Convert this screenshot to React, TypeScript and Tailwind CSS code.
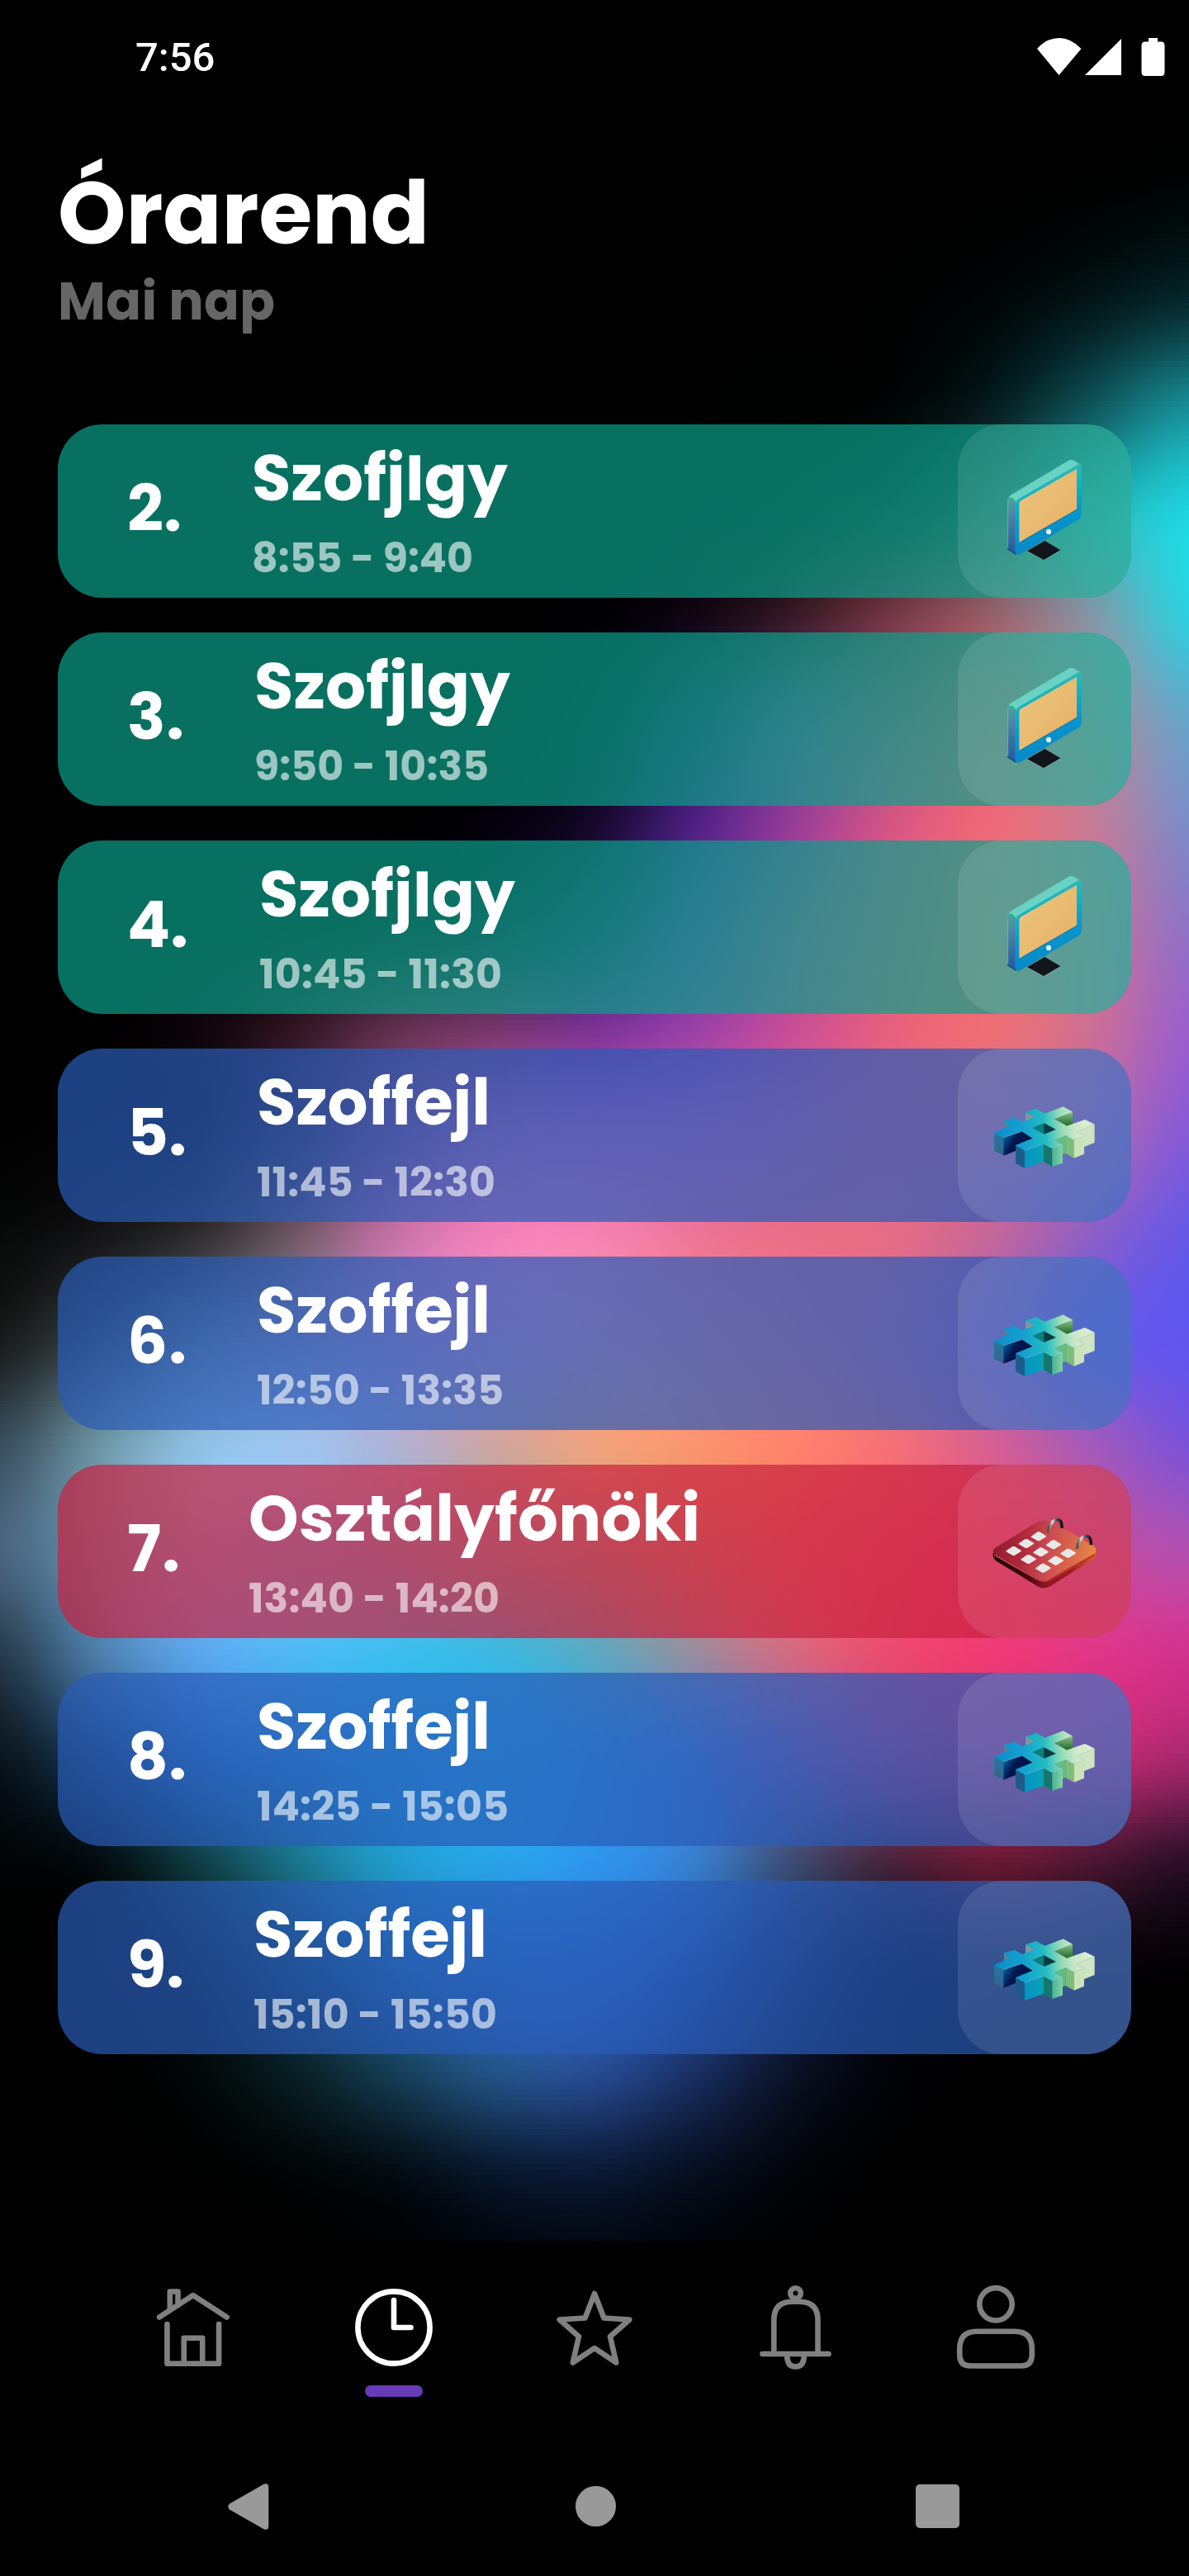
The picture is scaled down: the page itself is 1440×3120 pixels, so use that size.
import { useLayoutEffect, useRef, useState } from "react";
import type { ReactNode } from "react";

type RGB = [number, number, number];

/* Aurora colour field: one row every 126px, one stop every 120px. */
const Z: RGB = [0, 0, 0];
const FIELD: RGB[][] = [
  [Z, Z, Z, Z, Z, Z, Z, Z, Z, Z, Z, Z, Z],
  [Z, Z, Z, Z, Z, Z, Z, Z, Z, Z, Z, [0, 2, 2], [0, 6, 6]],
  [Z, Z, Z, Z, Z, Z, Z, Z, Z, [0, 1, 1], [0, 6, 7], [3, 22, 24], [6, 42, 46]],
  [Z, Z, Z, Z, Z, Z, Z, Z, [0, 2, 2], [1, 5, 5], [6, 28, 30], [14, 85, 90], [24, 142, 150]],
  [Z, Z, Z, Z, Z, Z, Z, [2, 2, 3], [5, 10, 10], [20, 28, 28], [50, 75, 75], [45, 165, 170], [30, 212, 222]],
  [Z, Z, Z, Z, Z, Z, [0, 0, 4], [16, 6, 18], [55, 25, 38], [115, 55, 70], [150, 95, 105], [130, 150, 165], [45, 208, 222]],
  [Z, Z, Z, Z, Z, Z, [5, 5, 20], [45, 25, 85], [115, 60, 130], [175, 78, 115], [220, 100, 112], [180, 135, 150], [100, 165, 202]],
  [Z, Z, Z, Z, Z, [4, 0, 12], [22, 8, 44], [78, 32, 128], [150, 60, 150], [212, 85, 132], [236, 105, 120], [198, 122, 148], [125, 140, 200]],
  [Z, Z, Z, [4, 2, 3], [15, 7, 12], [25, 14, 40], [50, 30, 90], [110, 50, 155], [180, 72, 152], [225, 90, 128], [236, 110, 118], [205, 115, 145], [142, 115, 198]],
  [Z, [1, 0, 1], [14, 5, 10], [50, 22, 36], [98, 48, 80], [120, 55, 110], [125, 52, 148], [155, 65, 165], [200, 78, 150], [230, 97, 125], [236, 110, 117], [205, 110, 148], [155, 95, 205]],
  [[1, 1, 1], [5, 5, 6], [14, 12, 14], [70, 45, 65], [150, 78, 125], [200, 100, 165], [215, 98, 180], [218, 98, 172], [225, 100, 152], [232, 105, 130], [225, 105, 135], [185, 105, 170], [132, 90, 215]],
  [[8, 9, 9], [22, 22, 24], [50, 48, 50], [115, 90, 105], [200, 115, 168], [242, 130, 185], [245, 132, 178], [238, 118, 152], [234, 110, 135], [228, 108, 135], [195, 102, 155], [140, 95, 200], [102, 88, 232]],
  [[25, 28, 28], [60, 75, 80], [105, 130, 145], [150, 150, 185], [195, 150, 200], [225, 150, 188], [242, 148, 165], [245, 138, 145], [242, 122, 135], [220, 112, 145], [175, 100, 175], [112, 90, 225], [98, 85, 238]],
  [[58, 78, 92], [108, 148, 165], [143, 192, 228], [158, 196, 238], [175, 178, 212], [205, 165, 160], [238, 162, 125], [250, 148, 112], [254, 130, 108], [244, 112, 118], [215, 95, 145], [165, 90, 185], [125, 82, 215]],
  [[72, 100, 125], [100, 148, 180], [125, 180, 225], [115, 182, 235], [120, 175, 215], [140, 168, 185], [165, 158, 150], [205, 140, 120], [238, 112, 108], [244, 85, 112], [235, 72, 125], [200, 75, 155], [178, 78, 175]],
  [[38, 58, 75], [75, 125, 170], [90, 165, 235], [78, 185, 242], [60, 190, 238], [60, 184, 225], [90, 168, 195], [150, 140, 160], [210, 105, 130], [234, 74, 112], [238, 58, 115], [224, 54, 134], [208, 50, 140]],
  [[10, 20, 28], [25, 62, 95], [40, 115, 182], [40, 145, 212], [35, 165, 230], [38, 172, 235], [48, 158, 230], [75, 132, 210], [135, 95, 160], [190, 65, 118], [205, 46, 102], [195, 42, 110], [165, 40, 108]],
  [[1, 4, 5], [3, 12, 15], [15, 60, 68], [26, 115, 140], [33, 155, 205], [40, 162, 230], [46, 148, 235], [55, 125, 205], [60, 75, 115], [70, 35, 58], [102, 25, 50], [75, 22, 48], [42, 14, 38]],
  [Z, [1, 3, 4], [5, 20, 25], [15, 62, 85], [30, 105, 160], [38, 114, 195], [42, 110, 200], [35, 82, 160], [22, 38, 78], [8, 8, 22], [10, 4, 12], [6, 2, 6], [3, 1, 3]],
  [Z, Z, [2, 8, 9], [9, 32, 38], [22, 62, 88], [35, 82, 135], [38, 75, 145], [25, 48, 100], [10, 18, 38], [2, 3, 8], Z, Z, Z],
  [Z, Z, Z, [1, 4, 5], [3, 11, 17], [8, 22, 42], [10, 24, 50], [6, 14, 30], [2, 4, 9], Z, Z, Z, Z],
  [Z, Z, Z, Z, [0, 1, 2], [1, 3, 7], [2, 4, 10], [1, 2, 5], Z, Z, Z, Z, Z],
];

function cubic(a: number, b: number, c: number, d: number, t: number) {
  const v =
    b + 0.5 * t * (c - a + t * (2 * a - 5 * b + 4 * c - d + t * (3 * (b - c) + d - a)));
  return Math.max(0, Math.min(255, v));
}

const ROW_STEPS = 18;
const STRIPS: string[] = [];
for (let r = 0; r < FIELD.length - 1; r++) {
  for (let s = 0; s < ROW_STEPS; s++) {
    const t = (s + 0.5) / ROW_STEPS;
    const at = (i: number) => FIELD[Math.max(0, Math.min(FIELD.length - 1, i))];
    const line = FIELD[0].map((_, c) =>
      [0, 1, 2].map((k) =>
        cubic(at(r - 1)[c][k], at(r)[c][k], at(r + 1)[c][k], at(r + 2)[c][k], t),
      ),
    );
    const stops: string[] = [];
    for (let c = 0; c < 12; c++) {
      for (let q = 0; q < 4; q++) {
        const px = (k: number) =>
          cubic(line[Math.max(0, c - 1)][k], line[c][k], line[c + 1][k], line[Math.min(12, c + 2)][k], q / 4).toFixed(1);
        stops.push(`rgb(${px(0)} ${px(1)} ${px(2)})`);
      }
    }
    stops.push(`rgb(${line[12].map((v) => v.toFixed(1)).join(" ")})`);
    STRIPS.push(`linear-gradient(90deg, ${stops.join(",")})`);
  }
}

function Aurora() {
  return (
    <div className="absolute inset-x-0 top-0 h-[2714px] overflow-hidden pt-[115px]" aria-hidden>
      {STRIPS.map((g, i) => (
        <div key={i} className="h-[7px]" style={{ backgroundImage: g }} />
      ))}
    </div>
  );
}

/* Tracks a line of text so that it spans the given advance width. */
function Fit({ width, className, children }: { width: number; className: string; children: string }) {
  const ref = useRef<HTMLSpanElement>(null);
  const [tracking, setTracking] = useState(0);
  useLayoutEffect(() => {
    if (!ref.current) return;
    const natural = ref.current.getBoundingClientRect().width;
    setTracking((width - natural) / (children.length - 1));
  }, [width, children]);
  return (
    <div className={`whitespace-nowrap ${className}`}>
      <span ref={ref} style={{ letterSpacing: tracking }}>
        {children}
      </span>
    </div>
  );
}

function MonitorIcon() {
  return (
    <svg viewBox="60 42 630 630" className="size-[210px]">
      <defs>
        <linearGradient id="mFrame" x1="0" y1="0" x2="0.25" y2="1">
          <stop offset="0.1" stopColor="#3fbfae" />
          <stop offset="0.42" stopColor="#10b3c4" />
          <stop offset="0.7" stopColor="#0796cf" />
          <stop offset="1" stopColor="#0a86c4" />
        </linearGradient>
        <linearGradient id="mSide" x1="0" y1="0" x2="0" y2="1">
          <stop offset="0" stopColor="#4fa89c" />
          <stop offset="0.35" stopColor="#4a86a2" />
          <stop offset="1" stopColor="#21579c" />
        </linearGradient>
        <linearGradient id="mScreen" x1="0" y1="0" x2="1" y2="1">
          <stop offset="0" stopColor="#edc581" />
          <stop offset="1" stopColor="#e5b062" />
        </linearGradient>
      </defs>
      <path d="M312 502 L376 465 L433 499 L372 535 Z" fill="#13151d" />
      <path d="M314 504 L372 536 L432 501" fill="none" stroke="#9fb0b4" strokeWidth="2" strokeDasharray="4 3" />
      <path d="M241 318 Q241 304 256 296 L280 320 V516 L241 494 Z" fill="url(#mSide)" />
      <path d="M242 316 V490" stroke="#9fb3c0" strokeWidth="2" />
      <path d="M241 494 L272 514" stroke="#154a86" strokeWidth="5" />
      <path d="M250 300 L460 175 Q472 168 482 173 L503 186 L490 200 L280 326 L268 326 Q258 310 246 310 Z" fill="#69d2c2" />
      <path d="M268 332 Q268 320 280 312 L490 190 Q510 180 510 202 V362 Q510 382 494 391 L288 513 Q268 522 268 500 Z" fill="url(#mFrame)" />
      <path d="M272 325 Q276 313 288 307 L494 187" fill="none" stroke="#a8e3da" strokeWidth="2" strokeDasharray="4 2" />
      <path d="M244 318 Q250 302 262 312 Q270 318 272 328 L262 322 Z" fill="#35ab9b" />
      <path d="M283 332 Q283 323 290 319 L492 204 V351 L283 471 Z" fill="url(#mScreen)" />
      <path d="M284 472 L493 351" stroke="#2b4964" strokeWidth="2.5" strokeDasharray="4 3" />
      <ellipse cx="390" cy="432" rx="9" ry="10" fill="#e8f3f7" />
    </svg>
  );
}

function HashIcon() {
  return (
    <svg viewBox="60 30 630 630" className="size-[210px]">
      <defs>
        <linearGradient id="hTop" gradientUnits="userSpaceOnUse" x1="195" y1="350" x2="555" y2="300">
          <stop offset="0" stopColor="#0d8bcb" />
          <stop offset="0.28" stopColor="#13a0cf" />
          <stop offset="0.5" stopColor="#22bdc3" />
          <stop offset="0.68" stopColor="#9cdcb8" />
          <stop offset="0.82" stopColor="#cfeacb" />
          <stop offset="1" stopColor="#deedd0" />
        </linearGradient>
        <linearGradient id="hFront" x1="0" y1="0" x2="1" y2="0">
          <stop offset="0" stopColor="#0593c6" />
          <stop offset="1" stopColor="#06a3b2" />
        </linearGradient>
        <linearGradient id="hLeft" x1="0" y1="0" x2="0" y2="1">
          <stop offset="0" stopColor="#23799f" />
          <stop offset="1" stopColor="#36638c" />
        </linearGradient>
        <linearGradient id="hNavy" x1="0" y1="0" x2="1" y2="0.5">
          <stop offset="0" stopColor="#0470b3" />
          <stop offset="0.45" stopColor="#02184f" />
          <stop offset="1" stopColor="#020f3b" />
        </linearGradient>
        <linearGradient id="hGreen" x1="0" y1="0" x2="1" y2="0">
          <stop offset="0" stopColor="#46b595" />
          <stop offset="1" stopColor="#83d1a6" />
        </linearGradient>
        <linearGradient id="hMoss" x1="0" y1="0" x2="0" y2="1">
          <stop offset="0" stopColor="#8cbf80" />
          <stop offset="1" stopColor="#1f6a2e" />
        </linearGradient>
      </defs>
      <path d="M228 292 L262 308 L228 322 Z" fill="#5a7f9e" />
      <path d="M306 262 L342 280 L306 296 Z" fill="#7e98a0" />
      <path d="M411 286 L477 260 V304 L458 311 Z" fill="url(#hMoss)" />
      <path d="M411 364 L452 346 V412 L441 414 V380 Z" fill="#62bd86" />
      <path d="M452 346 L482 362 V428 L452 411 Z" fill="#7cbd7c" />
      <path d="M482 362 L519 348 V413 L482 428 Z" fill="#cbe3b6" />
      <path d="M490 334 L557 305 V372 L519 387 V348 Z" fill="#cee4c2" />
      <path d="M192 336 L226 353 V419 L192 401 Z" fill="url(#hLeft)" />
      <path d="M226 353 L292 331 L332 356 L270 382 V402 L226 419 Z" fill="url(#hNavy)" />
      <path d="M270 382 L303 400 V465 L270 447 Z" fill="#1e5b8a" />
      <path d="M303 400 L372 376 V440 L303 465 Z" fill="url(#hFront)" />
      <path d="M372 376 L403 392 V459 L372 441 Z" fill="#16776f" />
      <path d="M403 392 L441 380 V446 L403 459 Z" fill="url(#hGreen)" />
      <path
        fillRule="evenodd"
        fill="url(#hTop)"
        d="M192 336 L246 312 L228 292 L266 281 L294 297 L340 279 L306 262 L344 249 L377 266 L443 241 L477 260 L411 286 L456 311 L522 288 L557 305 L490 334 L519 348 L482 362 L452 346 L411 364 L441 380 L403 392 L372 376 L303 400 L270 382 L332 356 L292 331 L226 353 Z M331 318 L373 341 L416 324 L373 301 Z"
      />
      <path d="M331 318 L373 301 V341 Z" fill="#08807f" />
      <path d="M373 301 L416 324 L373 341 Z" fill="#053f40" />
      <path d="M226 353 L292 331 M303 400 L372 376 L403 392 L441 380" fill="none" stroke="#a5dbe3" strokeWidth="2" strokeDasharray="4 3" />
    </svg>
  );
}

const DAYS: [number, number][] = [
  [353, 302], [308, 328], [262, 355],
  [407, 332], [361, 359], [316, 385],
  [460, 363], [415, 390], [369, 417],
];

function CalendarIcon() {
  return (
    <svg viewBox="60 42 630 630" className="size-[210px]">
      <defs>
        <linearGradient id="cTop" x1="0" y1="0.4" x2="1" y2="0.5">
          <stop offset="0" stopColor="#8e1a2b" />
          <stop offset="0.3" stopColor="#b02a3c" />
          <stop offset="0.55" stopColor="#cc4c50" />
          <stop offset="0.8" stopColor="#dc6a4a" />
          <stop offset="1" stopColor="#e88a43" />
        </linearGradient>
        <linearGradient id="cSide" x1="0" y1="0" x2="1" y2="0">
          <stop offset="0" stopColor="#1c0508" />
          <stop offset="0.35" stopColor="#4a0a10" />
          <stop offset="0.5" stopColor="#8e1420" />
          <stop offset="0.75" stopColor="#a01c1c" />
          <stop offset="1" stopColor="#d4661f" />
        </linearGradient>
        <linearGradient id="cRing" x1="0" y1="0" x2="1" y2="0">
          <stop offset="0" stopColor="#4b4b4b" />
          <stop offset="0.3" stopColor="#e6e6e6" />
          <stop offset="0.55" stopColor="#5a5a5a" />
          <stop offset="1" stopColor="#111111" />
        </linearGradient>
      </defs>
      <path d="M188 364 Q186 382 200 392 L350 484 Q373 498 398 482 L548 388 Q564 376 563 358 L375 300 Z" fill="url(#cSide)" />
      <path d="M192 370 L350 460 Q372 470 396 460 L556 370" fill="none" stroke="#c03038" strokeWidth="5" />
      <path d="M196 344 L344 253 Q356 246 370 246 L392 246 L440 270 L552 336 Q572 352 554 366 L398 455 Q372 468 350 455 L196 368 Q180 356 196 344 Z" fill="url(#cTop)" />
      <path d="M192 368 L350 457 Q372 468 394 458" fill="none" stroke="#e8a09c" strokeWidth="2" strokeDasharray="4 3" />
      {DAYS.map(([x, y]) => (
        <path
          key={`${x}-${y}`}
          d={`M${x - 26} ${y} L${x - 3} ${y - 16} L${x + 4} ${y - 16} L${x + 28} ${y - 2} V${y + 2} L${x + 4} ${y + 17} L${x - 2} ${y + 17} L${x - 27} ${y + 3} Z`}
          fill="#e9e8e8"
        />
      ))}
      <g fill="none" strokeLinecap="butt">
        <path d="M390 288 C390 258 408 242 422 242 C434 242 438 254 438 272" stroke="url(#cRing)" strokeWidth="11" />
        <path d="M495 348 C495 318 513 302 527 302 C540 302 544 314 544 333" stroke="url(#cRing)" strokeWidth="11" />
      </g>
    </svg>
  );
}

type Kind = "monitor" | "hash" | "calendar";
const ICONS: Record<Kind, () => ReactNode> = { monitor: MonitorIcon, hash: HashIcon, calendar: CalendarIcon };
const TINT: Record<Kind, string> = {
  monitor: "bg-[#0ca08a]/70",
  hash: "bg-[#295bb6]/70",
  calendar: "bg-[#c82240]/70",
};

interface Lesson {
  n: string;
  nWidth: number;
  gap: string;
  title: string;
  titleWidth: number;
  time: string;
  timeWidth: number;
  kind: Kind;
}

const LESSONS: Lesson[] = [
  { n: "2.", nWidth: 66, gap: "w-[151px]", title: "SzofjIgy", titleWidth: 310, time: "8:55 - 9:40", timeWidth: 268, kind: "monitor" },
  { n: "3.", nWidth: 69, gap: "w-[154px]", title: "SzofjIgy", titleWidth: 310, time: "9:50 - 10:35", timeWidth: 284, kind: "monitor" },
  { n: "4.", nWidth: 74, gap: "w-[160px]", title: "SzofjIgy", titleWidth: 310, time: "10:45 - 11:30", timeWidth: 294, kind: "monitor" },
  { n: "5.", nWidth: 72, gap: "w-[157px]", title: "Szoffejl", titleWidth: 283, time: "11:45 - 12:30", timeWidth: 289, kind: "hash" },
  { n: "6.", nWidth: 72, gap: "w-[157px]", title: "Szoffejl", titleWidth: 283, time: "12:50 - 13:35", timeWidth: 299, kind: "hash" },
  { n: "7.", nWidth: 64, gap: "w-[147px]", title: "Osztályfőnöki", titleWidth: 547, time: "13:40 - 14:20", timeWidth: 304, kind: "calendar" },
  { n: "8.", nWidth: 72, gap: "w-[157px]", title: "Szoffejl", titleWidth: 283, time: "14:25 - 15:05", timeWidth: 305, kind: "hash" },
  { n: "9.", nWidth: 69, gap: "w-[153px]", title: "Szoffejl", titleWidth: 283, time: "15:10 - 15:50", timeWidth: 295, kind: "hash" },
];

function LessonCard({ lesson }: { lesson: Lesson }) {
  const Icon = ICONS[lesson.kind];
  return (
    <li className={`flex h-[210px] overflow-hidden rounded-[54px] pl-[84px] ${TINT[lesson.kind]}`}>
      <div className={`shrink-0 pt-[62px] ${lesson.gap}`}>
        <Fit width={lesson.nWidth} className="text-[77px] leading-[80px]">{lesson.n}</Fit>
      </div>
      <div className="min-w-0 flex-1 pt-[25px]">
        <Fit width={lesson.titleWidth} className="text-[77px] leading-[80px]">{lesson.title}</Fit>
        <Fit width={lesson.timeWidth} className="mt-[27px] text-[49px] leading-[60px] text-white/60">{lesson.time}</Fit>
      </div>
      <div className="size-[210px] shrink-0 rounded-[54px] bg-white/10">
        <Icon />
      </div>
    </li>
  );
}

function StatusBar() {
  return (
    <div className="flex h-[140px] items-center justify-between pl-[164px] pr-[28px] font-[Roboto] text-[49px] font-medium">
      <span>7:56</span>
      <svg viewBox="1258 41 156 56" className="h-14 w-[156px]" fill="#fff">
        <path d="M1284.500 90 L1258 58 Q1270 45 1284.500 45 Q1299 45 1311.500 58 Z" />
        <path d="M1360 46 V90 H1316 Z" />
        <path d="M1393 45 H1404 V49.500 H1408 Q1412.500 49.500 1412.500 54 V86.500 Q1412.500 91 1408 91 H1389 Q1384.500 91 1384.500 86.500 V54 Q1384.500 49.500 1389 49.500 H1393 Z" />
      </svg>
    </div>
  );
}

const TABS: { id: string; box: string; draw: ReactNode }[] = [
  {
    id: "home",
    box: "186 2760 96 116",
    draw: (
      <>
        <path d="M205.800 2797 V2775.500 H215.500 V2792" />
        <path d="M193 2806.500 L233.800 2780 L274.700 2806.500" />
        <path d="M202.400 2815 V2862.700 H265.100 V2815" />
        <path d="M222.700 2862.700 V2831.700 H245.200 V2862.700" />
      </>
    ),
  },
  {
    id: "timetable",
    box: "429 2760 96 116",
    draw: (
      <>
        <circle cx="477" cy="2819" r="43.600" />
        <path d="M477 2786 V2819 H497.500" />
      </>
    ),
  },
  {
    id: "grades",
    box: "672 2760 96 116",
    draw: (
      <path d="M720 2778 L731.400 2807.500 L762.300 2809.500 L739 2830 L746.200 2861.500 L720 2844 L693.800 2861.500 L701 2830 L677.700 2809.500 L708.600 2807.500 Z" />
    ),
  },
  {
    id: "messages",
    box: "915 2760 96 116",
    draw: (
      <>
        <circle cx="963.500" cy="2777.500" r="6.300" />
        <path d="M937.300 2851 V2810 Q937.300 2787.700 959.500 2787.700 H968 Q990.500 2787.700 990.500 2810 V2851" />
        <path d="M923.500 2851 H1003.500" />
        <path d="M953.200 2853 Q953.200 2866.500 963.500 2866.500 Q973.800 2866.500 973.800 2853" />
      </>
    ),
  },
  {
    id: "profile",
    box: "1158 2760 96 116",
    draw: (
      <>
        <circle cx="1206" cy="2790.800" r="19.700" />
        <path d="M1183 2823.700 H1229 Q1249.800 2823.700 1249.800 2845 V2852 Q1249.800 2865.500 1237 2865.500 H1175 Q1162.200 2865.500 1162.200 2852 V2845 Q1162.200 2823.700 1183 2823.700 Z" />
      </>
    ),
  },
];

function TabBar() {
  return (
    <nav className="flex h-[232px] bg-black px-[112px] pt-[46px]">
      {TABS.map((tab) => {
        const active = tab.id === "timetable";
        return (
          <div key={tab.id} className="flex w-[243px] flex-col items-center">
            <svg
              viewBox={tab.box}
              className={`h-[116px] w-24 ${active ? "text-white" : "text-[#808080]"}`}
              fill="none"
              stroke="currentColor"
              strokeWidth="6.6"
              strokeLinecap="round"
              strokeLinejoin="round"
            >
              {tab.draw}
            </svg>
            {active && <div className="mt-[13px] h-[14px] w-[70px] rounded-full bg-[#673ab7]" />}
          </div>
        );
      })}
    </nav>
  );
}

function SystemNav() {
  return (
    <div className="flex flex-1 items-start justify-between bg-black pl-[275px] pr-[278px] pt-[58px] text-[#999999]">
      <svg viewBox="275 3004 52 64" className="h-16 w-[52px]" fill="currentColor">
        <path d="M278 3032.500 L319.500 3008.700 Q325.300 3006.500 325.300 3013 V3059 Q325.300 3065.500 319.500 3063.300 L278 3039.500 Q274.500 3036 278 3032.500 Z" />
      </svg>
      <div className="mt-[7px] ml-[92px] mr-[86px] size-[49px] rounded-full bg-current" />
      <div className="mt-[5px] size-[53px] rounded-[5px] bg-current" />
    </div>
  );
}

export default function App() {
  return (
    <div className="relative isolate h-[3120px] w-[1440px] overflow-hidden bg-black text-white">
      <div className="absolute inset-0 -z-10">
        <Aurora />
      </div>
      <div className="flex h-full flex-col font-bold font-[Poppins,Inter,sans-serif] [font-feature-settings:'cv11','calt'_0]">
        <StatusBar />
        <header className="px-[70px] pt-[59px]">
          <Fit width={450} className="text-[105px] leading-[120px]">Órarend</Fit>
          <Fit width={263} className="mt-[10px] text-[63px] leading-[72px] text-[#666666]">Mai nap</Fit>
        </header>
        <ul className="mt-[113px] flex h-[2200px] flex-col gap-[42px] px-[70px]">
          {LESSONS.map((lesson) => (
            <LessonCard key={lesson.n} lesson={lesson} />
          ))}
        </ul>
        <TabBar />
        <SystemNav />
      </div>
    </div>
  );
}
